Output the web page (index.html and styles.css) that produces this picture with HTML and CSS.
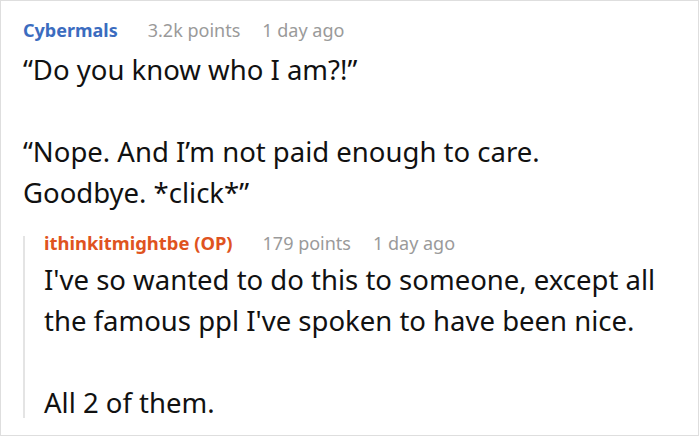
FILE: index.html
```html
<!DOCTYPE html>
<html>
<head>
<meta charset="utf-8">
<link rel="stylesheet" href="styles.css">
</head>
<body>
<div class="box">
  <div class="comment">
    <div class="meta"><span class="author">Cybermals</span><span class="info">3.2k points</span><span class="info">1 day ago</span></div>
    <div class="text">
      <p>“Do you know who I am?!”</p>
      <p>“Nope. And I’m not paid enough to care. Goodbye. *click*”</p>
    </div>
    <div class="reply">
      <div class="meta"><span class="author op">ithinkitmightbe (OP)</span><span class="info">179 points</span><span class="info">1 day ago</span></div>
      <div class="text">
        <p>I've so wanted to do this to someone, except all the famous ppl I've spoken to have been nice.</p>
        <p>All 2 of them.</p>
      </div>
    </div>
  </div>
</div>
</body>
</html>
```
FILE: styles.css
```css
html, body { margin: 0; padding: 0; background: #fff; }
body { font-family: "Noto Sans", sans-serif; color: #111; }
.box {
  width: 697px;
  height: 434px;
  border: 1px solid #dedede;
  overflow: hidden;
}
.comment { padding: 17px 32px 0 22px; }
.meta { display: flex; font-size: 18px; line-height: 24px; }
.author { font-weight: bold; color: #3b6cbf; margin-right: 30px; }
.author.op { color: #df5320; font-size: 18.4px; }
.info { color: #9a9a9a; margin-right: 22px; }
.text { font-size: 27.5px; line-height: 41px; margin-top: 7px; }
.text p { margin: 0 0 41px 0; }
.text p:last-child { margin-bottom: 0; }
.reply {
  margin-top: 23px;
  border-left: 2px solid #e4e4e4;
  padding-left: 19px;
}
.reply .meta { line-height: 14px; }
.reply .text { margin-top: 9px; }
.reply .text p:first-child { margin-bottom: 46px; }
.reply .text p:last-child { line-height: 31px; }
```
